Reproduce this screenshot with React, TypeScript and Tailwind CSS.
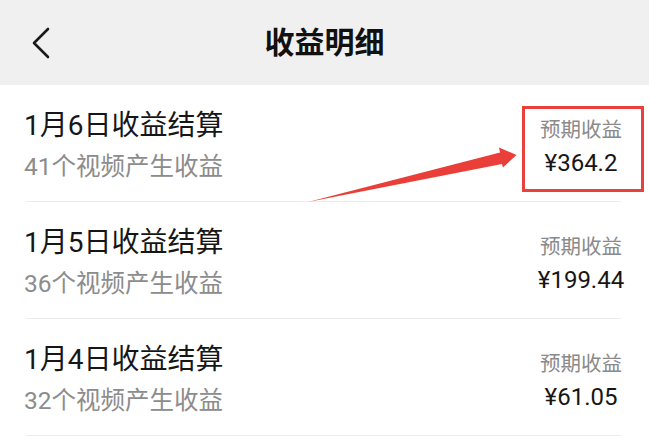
const rows = [
  { date: '1月6日收益结算', count: '41个视频产生收益', amount: '¥364.2', marked: true },
  { date: '1月5日收益结算', count: '36个视频产生收益', amount: '¥199.44' },
  { date: '1月4日收益结算', count: '32个视频产生收益', amount: '¥61.05' },
]

const font = "font-['Roboto','Noto_Sans_CJK_SC',sans-serif]"

function IncomeRow({ date, count, amount, marked }: (typeof rows)[number]) {
  return (
    <div className="relative">
      <div className="flex h-[116px] justify-between">
        <div className="pl-[24px] pt-[21px]">
          <div className="text-[28px] leading-[40px] text-[#161616]">{date}</div>
          <div className="text-[24.5px] leading-[41px] text-[#8c8c8c]">{count}</div>
        </div>
        <div className="mr-[8px] w-[120px] pt-[30px] text-center">
          <div className="text-[20.5px] leading-[30px] text-[#8a8a8a]">预期收益</div>
          <div className="mt-[2px] text-[24px] leading-[32px] text-[#161616]">{amount}</div>
        </div>
      </div>
      <div className="ml-[26px] mr-[28px] h-px bg-[#ececec]" />
      {marked ? (
        <div className="absolute left-[522px] top-[21px] h-[86px] w-[122px] border-[3px] border-[#e8413b]" />
      ) : null}
    </div>
  )
}

export default function App() {
  return (
    <div className={`relative h-[443px] w-[649px] overflow-hidden bg-white ${font}`}>
      <header className="grid h-[85px] grid-cols-[1fr_auto_1fr] items-center bg-[#f0f0f0]">
        <div className="pl-[30px]">
          <svg width="22" height="32" viewBox="0 0 22 32" fill="none">
            <polyline
              points="18,2 4,16 18,30"
              stroke="#1a1a1a"
              strokeWidth="2.6"
              strokeLinecap="round"
              strokeLinejoin="round"
            />
          </svg>
        </div>
        <h1 className="text-[30px] font-bold leading-none text-[#111]">收益明细</h1>
        <div />
      </header>
      {rows.map((row) => (
        <IncomeRow key={row.date} {...row} />
      ))}
      <svg
        className="pointer-events-none absolute left-0 top-0"
        width="649"
        height="443"
        viewBox="0 0 649 443"
      >
        <polygon
          points="308,202 500,152.5 499,147.5 516.5,155 503,167.5 502,164"
          fill="#ea3f38"
        />
      </svg>
    </div>
  )
}
